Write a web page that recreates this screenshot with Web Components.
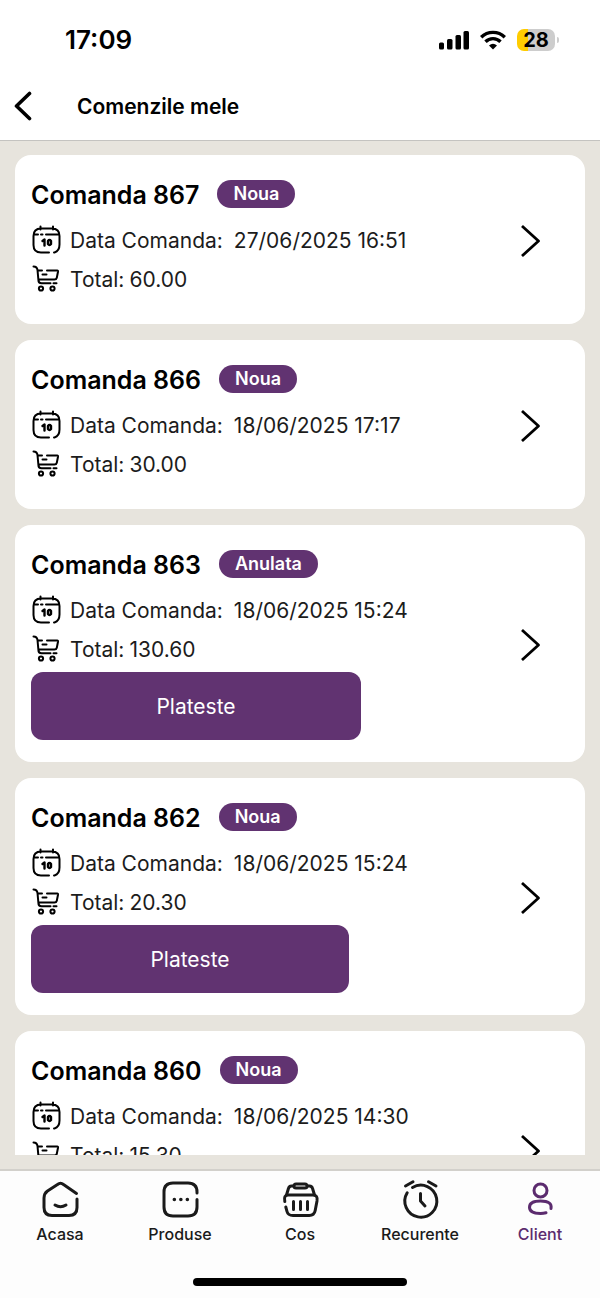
<!DOCTYPE html>
<html lang="ro">
<head>
<meta charset="utf-8">
<meta name="viewport" content="width=device-width, initial-scale=1">
<title>Comenzile mele</title>
<style>
  body { margin: 0; font-family: Inter, "Noto Sans", sans-serif; color: #000; background: #fdfdfd; }
</style>
</head>
<body>
<orders-app>
  <status-bar slot="top" time="17:09" battery="28"></status-bar>
  <page-header slot="top">Comenzile mele</page-header>
  <order-card number="867" status="Noua" date="27/06/2025 16:51" total="60.00"></order-card>
  <order-card number="866" status="Noua" date="18/06/2025 17:17" total="30.00"></order-card>
  <order-card number="863" status="Anulata" date="18/06/2025 15:24" total="130.60"><pay-button style="--pay-width: 330px">Plateste</pay-button></order-card>
  <order-card number="862" status="Noua" date="18/06/2025 15:24" total="20.30"><pay-button style="--pay-width: 318px">Plateste</pay-button></order-card>
  <order-card number="860" status="Noua" date="18/06/2025 14:30" total="15.30"><pay-button style="--pay-width: 318px">Plateste</pay-button></order-card>
  <tab-bar slot="bottom">
    <tab-item icon="home">Acasa</tab-item>
    <tab-item icon="products">Produse</tab-item>
    <tab-item icon="basket">Cos</tab-item>
    <tab-item icon="clock">Recurente</tab-item>
    <tab-item icon="person" active>Client</tab-item>
  </tab-bar>
</orders-app>
<script>
const define = (name, render) => customElements.define(name, class extends HTMLElement {
  constructor() {
    super();
    this.attachShadow({ mode: "open" });
  }
  connectedCallback() {
    this.shadowRoot.innerHTML = render(this);
  }
});
const attr = (el, name) => el.getAttribute(name) || "";

const icons = {
  home: `<path d="M34.500 12.500 21.500 3.500q-3-2.500-6 0L5.500 10Q2 12.500 2 17v9.500q0 8 8 8h17q8 0 8-8V18"/><path d="M13 24q5.500 3.500 11 0"/>`,
  products: `<path d="M35 12V11q0-9-9-9H11q-9 0-9 9v15q0 9 9 9h15q9 0 9-9v-7.500"/><path d="M12.300 18.500h.1M18.800 18.500h.1M25.300 18.500h.1" stroke-width="3.500"/>`,
  basket: `<path d="M11 5H9.500Q7 5 6.300 8L4.500 14M26 5h1.500Q30 5 30.700 8L32.500 14"/><rect x="12" y="3" width="13" height="4" rx="2"/><path d="M2.800 20.500Q1.500 14 6 14h25q5 0 4 6l-1.800 9.500q-1 5-6 5H11q-5 0-6-4L3.800 26"/><path d="M11.500 20.500v8M18.500 20.500v8M25.500 20.500v8"/>`,
  clock: `<path d="M10.500 6.500a16 16 0 1 1-5.300 5.300"/><path d="M18.500 12.500v7.500l4.500 5"/><path d="m3.500 5 7.500-4.300M34 5l-7.500-4.300"/>`,
  person: `<circle cx="18.500" cy="9.500" r="6.500"/><path d="M29 27.500q1.500-7.500-10.500-7.500-11 0-11 6.200t11 6.200q3 0 5.500-.7"/>`,
  calendar: `<path d="M22.500 27.500h-.5M17 27.500H9q-7.500 0-7.500-7.500V11Q1.500 3.500 9 3.500h11q7.500 0 7.500 7.500v8.500q0 6.500-5 8M8.500 1.500v3M21 1.500v3M2 9.500h4M9 9.500h1.500M14 9.500h13"/><path d="m10.500 16 2-1.500v6M16 16v3q1.500 2 3 0v-3q-1.500-2-3 0" stroke-width="2.400"/>`,
  cart: `<path d="M1.500 1.500q3.500 0 4 3.500l1 11q.3 2.200 3 2.200h9M21.500 18.200h3M6 5.500h4M15 5.500h10.200q1 0 .8 1.200l-1.200 6q-.4 1.800-2.400 1.800H7M10.500 9.500h4"/><circle cx="9" cy="23.500" r="2.100"/><circle cx="20.500" cy="23.500" r="2.100"/>`
};
const icon = (name, width, height, stroke) =>
  `<svg width="${width}" height="${height}" viewBox="0 0 ${width} ${height}" overflow="visible" fill="none" stroke="currentColor" stroke-width="${stroke}" stroke-linecap="round" stroke-linejoin="round" aria-hidden="true">${icons[name]}</svg>`;

define("orders-app", () => `
  <style>
    :host { display: flex; flex-direction: column; height: 100vh; background: #e7e4dd; }
    main { flex: 1; min-height: 0; display: flex; flex-direction: column; gap: 16px; padding: 14px 15px 0; margin-bottom: 14px; overflow-y: auto; scrollbar-width: none; }
  </style>
  <slot name="top"></slot>
  <main><slot></slot></main>
  <slot name="bottom"></slot>`);

define("status-bar", el => `
  <style>
    :host { display: flex; align-items: center; justify-content: space-between; height: 72px; padding: 8px 41px 0 65px; background: #fff; box-sizing: border-box; flex: none; }
    time { font-size: 26px; line-height: 32px; font-weight: 600; }
    .signals { display: flex; align-items: center; gap: 11px; }
    .battery { display: flex; align-items: center; gap: 2px; }
    .level { width: 38px; height: 22px; border-radius: 7px; background: linear-gradient(90deg, #fc0 28%, #cdcdcd 28%); font-size: 20px; line-height: 22px; font-weight: 700; text-align: center; }
    .tip { width: 2px; height: 6px; border-radius: 0 2px 2px 0; background: #cdcdcd; }
  </style>
  <time>${attr(el, "time")}</time>
  <div class="signals">
    <svg width="30" height="20" viewBox="0 0 30 20" aria-hidden="true"><rect y="12.500" width="5" height="7" rx="1.500"/><rect x="8" y="9" width="5.500" height="10.500" rx="1.500"/><rect x="16.500" y="5" width="5.500" height="14.500" rx="1.500"/><rect x="24.500" y="1" width="5.500" height="18.500" rx="1.500"/></svg>
    <svg width="26" height="20" viewBox="0 0 26 20" fill="none" stroke="#000" stroke-width="3.400" aria-hidden="true"><path d="M1.200 7.200a16.800 16.800 0 0 1 23.600 0M5.500 11.700a10.600 10.600 0 0 1 15 0"/><path d="M13 19.500 9 15.500q4-3.300 8 0Z" fill="#000" stroke="none"/></svg>
    <div class="battery"><div class="level">${attr(el, "battery")}</div><div class="tip"></div></div>
  </div>`);

define("page-header", () => `
  <style>
    :host { display: flex; align-items: center; gap: 40px; height: 69px; padding: 0 9px; background: #fff; border-bottom: 1px solid #c4c3c0; box-sizing: border-box; flex: none; }
    button { display: flex; padding: 4px; border: 0; background: none; color: #000; }
    h1 { margin: 0; padding-top: 2px; font-size: 21px; line-height: 28px; font-weight: 600; }
  </style>
  <button type="button" aria-label="Inapoi"><svg width="20" height="30" viewBox="0 0 20 30" fill="none" stroke="currentColor" stroke-width="3.600" stroke-linecap="round" stroke-linejoin="round"><path d="M16.500 2.500 3.500 15l13 12.500"/></svg></button>
  <h1><slot></slot></h1>`);

define("order-card", el => `
  <style>
    :host { display: block; flex: none; background: #fff; border-radius: 16px; }
    article { display: flex; align-items: center; justify-content: space-between; padding: 24px 43px 22px 16px; }
    header { display: flex; align-items: center; gap: 18px; margin-bottom: 11px; }
    h2 { margin: 0; padding-top: 2px; font-size: 25px; line-height: 28px; font-weight: 600; }
    .badge { padding: 0 16px; border-radius: 14px; background: #613371; color: #fff; font-size: 18px; line-height: 28px; font-weight: 600; }
    dl { margin: 0 0 4px; color: #1c1c1c; font-size: 21px; line-height: 37px; }
    .row { display: flex; align-items: center; height: 39px; padding-left: 1px; }
    .row svg { flex: none; width: 30px; color: #000; margin-right: 8px; }
    dt, dd { margin: 0; padding-top: 2px; }
    .date dd { margin-left: 11px; }
    .total dd { margin-left: 5px; }
    a { display: flex; color: #000; }
  </style>
  <article>
    <div>
      <header><h2>Comanda ${attr(el, "number")}</h2><span class="badge">${attr(el, "status")}</span></header>
      <dl>
        <div class="row date">${icon("calendar", 30, 29, 2)}<dt>Data Comanda:</dt><dd>${attr(el, "date")}</dd></div>
        <div class="row total">${icon("cart", 30, 27, 2)}<dt>Total:</dt><dd>${attr(el, "total")}</dd></div>
      </dl>
      <slot></slot>
    </div>
    <a href="#comanda-${attr(el, "number")}" aria-label="Detalii comanda ${attr(el, "number")}"><svg width="22" height="34" viewBox="0 0 22 34" fill="none" stroke="currentColor" stroke-width="2.800" stroke-linejoin="round"><path d="M2 2 18.500 17 2 32"/></svg></a>
  </article>`);

define("pay-button", () => `
  <style>
    :host { display: block; }
    button { display: block; width: var(--pay-width, 100%); max-width: 100%; height: 68px; padding: 2px 8px 0; border: 0; border-radius: 12px; background: #613371; color: #fff; font: 400 21px/28px Inter, "Noto Sans", sans-serif; }
  </style>
  <button type="button"><slot></slot></button>`);

define("tab-bar", () => `
  <style>
    :host { display: block; flex: none; background: #fdfdfd; border-top: 2px solid #d2d0cb; }
    nav { display: grid; grid-template-columns: repeat(5, 1fr); padding-top: 10px; }
    .indicator { width: 214px; height: 8px; margin: 34px auto 12px; border-radius: 4px; background: #000; }
  </style>
  <nav><slot></slot></nav>
  <div class="indicator"></div>`);

define("tab-item", el => `
  <style>
    :host { display: block; color: #1a1a1a; }
    :host([active]) { color: #5b2b6e; }
    a { display: flex; flex-direction: column; align-items: center; gap: 6px; color: inherit; text-decoration: none; font-size: 16px; line-height: 20px; font-weight: 500; }
  </style>
  <a href="#${attr(el, "icon")}">${icon(attr(el, "icon"), 37, 37, 3)}<span><slot></slot></span></a>`);
</script>
</body>
</html>
